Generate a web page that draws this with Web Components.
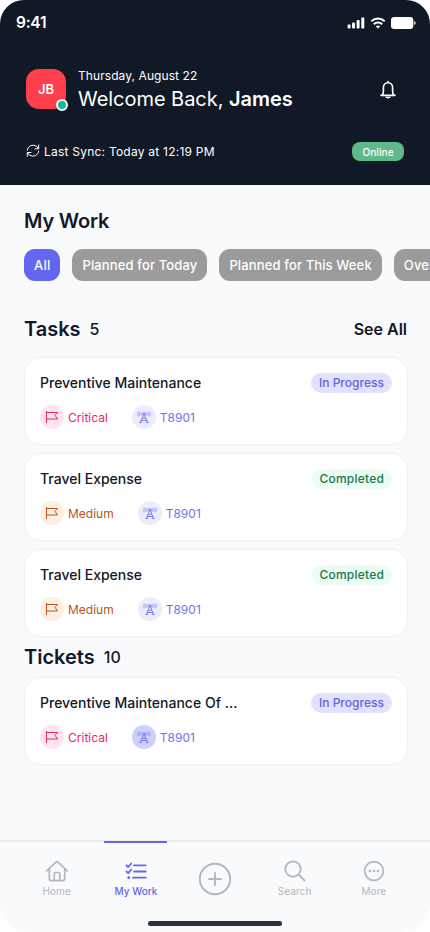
<!DOCTYPE html>
<html lang="en">
<head>
<meta charset="utf-8">
<title>My Work</title>
<style>
html,body{margin:0;padding:0;background:#fff}
body{width:430px;height:932px;overflow:hidden;font-family:Inter,"Liberation Sans",sans-serif;color:#111927}
</style>
</head>
<body>
<work-app></work-app>
<script>
function define(name, html) {
  const t = document.createElement('template');
  t.innerHTML = html;
  customElements.define(name, class extends HTMLElement {
    constructor() {
      super();
      this.attachShadow({ mode: 'open' }).append(t.content.cloneNode(true));
    }
  });
}

const ICONS = {
  sync: '<svg width="14" height="14" viewBox="0 0 14 14" fill="none" stroke="currentColor" stroke-linecap="round" stroke-linejoin="round"><path d="M12.700 1v3.800H9M1.300 12.300V8.500H5M12.500 4.600A5.900 5.900 0 0 0 2.200 3.800Q1.300 5 1.300 6.200M1.500 8.700a5.900 5.900 0 0 0 10.300.8q.9-1.200.9-2.400"/></svg>',
  bell: '<svg width="18" height="20" viewBox="0 0 18 20" fill="none" stroke="currentColor" stroke-width="1.600" stroke-linecap="round" stroke-linejoin="round"><path d="M9 1.500v1.200M2 15.400h14M3.200 15.200Q4.400 13.500 4.400 11V7.400a4.600 4.600 0 0 1 9.200 0V11q0 2.500 1.200 4.200"/><path d="M7 17.400q2 1.600 4 0z" fill="currentColor" stroke-width="1"/></svg>',
  signal: '<svg width="18" height="12" viewBox="0 0 18 12" fill="currentColor"><rect x=".6" y="7.500" width="3" height="4" rx=".9"/><rect x="5" y="5.500" width="3" height="6" rx=".9"/><rect x="9.600" y="3" width="3" height="8.500" rx=".9"/><rect x="14.300" y=".5" width="3" height="11" rx=".9"/></svg>',
  wifi: '<svg width="16" height="12" viewBox="0 0 16 12" fill="none" stroke="currentColor" stroke-width="2"><path d="M1.300 4.300Q4.200 1.500 8 1.500T14.700 4.300"/><path d="M3.800 7.200Q5.600 5.500 8 5.500T12.200 7.200"/><path d="M5.800 9.300Q8 7.700 10.200 9.300L8 11.600z" fill="currentColor" stroke="none"/></svg>',
  battery: '<svg width="25" height="12" viewBox="0 0 25 12" fill="currentColor"><rect width="22.300" height="12" rx="3.200"/><path d="M23.200 4v4q1.400-.6 1.400-2t-1.400-2z"/></svg>',
  flag: '<svg width="14" height="14" viewBox="0 0 14 14" fill="none" stroke="currentColor" stroke-linecap="round" stroke-linejoin="round"><path d="M1.500 1.500v11M1.500 2.500h11.200l-2.800 2.800 2.800 3.700H1.500"/></svg>',
  tower: '<svg width="14" height="14" viewBox="0 0 14 14" fill="none" stroke="currentColor" stroke-width=".9" stroke-linecap="round" stroke-linejoin="round"><path d="M3.500 12.300 6.300 5.500h1.400l2.800 6.800M5.300 8.300h3.400M4.300 10.500h5.400M2.700 12.400h2M9.300 12.400h2"/><circle cx="7" cy="4" r="1.200"/><path d="M4.700 2.700q-.7 1.200 0 2.600M9.300 2.700q.7 1.200 0 2.600M2.900 2.200q-.8 1.600 0 3.400M11.100 2.200q.8 1.600 0 3.400M1.100 1.900q-.8 2 0 4M12.900 1.900q.8 2 0 4" stroke-width=".6"/></svg>',
  home: '<svg width="24" height="22" viewBox="0 0 24 22" fill="none" stroke="currentColor" stroke-width="1.700" stroke-linecap="round" stroke-linejoin="round"><path d="M1.500 11 11.500 1.700a.7.700 0 0 1 1 0L22.500 11M4.300 8.800v10q0 1.900 1.900 1.900h11.600q1.900 0 1.900-1.900v-10M9.200 20.500v-6.700q0-1.300 1.300-1.300h3q1.300 0 1.300 1.300v6.700"/></svg>',
  checks: '<svg width="22" height="18" viewBox="0 0 22 18" fill="none" stroke="currentColor" stroke-width="1.800" stroke-linecap="round" stroke-linejoin="round"><path d="M9 3.300h11.700M9 9.500h11.700M8 15.700h12.700M1.500 3.300 3.200 5 6.300 1.500M1.500 9.500l1.700 1.700 3.100-3.500"/><circle cx="3.700" cy="15.700" r="1.400" fill="currentColor" stroke="none"/></svg>',
  plus: '<svg width="34" height="34" viewBox="0 0 34 34" fill="none" stroke="currentColor" stroke-width="1.900" stroke-linecap="round"><circle cx="17" cy="17" r="15.200"/><path d="M17 11v12M11 17h12"/></svg>',
  search: '<svg width="22" height="22" viewBox="0 0 22 22" fill="none" stroke="currentColor" stroke-width="1.800" stroke-linecap="round"><circle cx="9" cy="9" r="7.700"/><path d="m14.700 14.700 5.800 5.800"/></svg>',
  more: '<svg width="22" height="22" viewBox="0 0 22 22" fill="none" stroke="currentColor" stroke-width="1.700"><circle cx="11" cy="11" r="9.400"/><g fill="currentColor" stroke="none"><circle cx="7" cy="11" r="1.300"/><circle cx="11" cy="11" r="1.300"/><circle cx="15" cy="11" r="1.300"/></g></svg>'
};

customElements.define('ui-icon', class extends HTMLElement {
  constructor() {
    super();
    this.attachShadow({ mode: 'open' });
  }
  connectedCallback() {
    this.shadowRoot.innerHTML = '<style>:host{display:inline-flex;flex:none}svg{display:block}</style>' + ICONS[this.getAttribute('name')];
  }
});

define('status-bar', `<style>
:host{display:flex;justify-content:space-between;align-items:center;height:46px;padding:0 14px 0 16px;box-sizing:border-box}
.time{font-size:15.500px;font-weight:600;line-height:20px;letter-spacing:-.25px}
.sys{display:flex;gap:5px;align-items:center}
</style><span class="time">9:41</span><span class="sys"><ui-icon name="signal"></ui-icon><ui-icon name="wifi"></ui-icon><ui-icon name="battery"></ui-icon></span>`);

define('user-avatar', `<style>
:host{display:flex;position:relative;width:40px;height:40px;border-radius:13px;background:#ff3f4c;align-items:center;justify-content:center;font-size:13px;font-weight:600;letter-spacing:-.1px;flex:none}
i{position:absolute;right:-2px;bottom:-2px;width:8px;height:8px;border:2px solid #fff;border-radius:50%;background:#14b8a0}
</style><slot></slot><i></i>`);

define('app-header', `<style>
:host{display:block;flex:none;height:185px;background:#111927;color:#fff;border-radius:24px 24px 0 0}
.me{display:flex;align-items:center;padding:23px 33px 0 26px;height:40px}
.txt{margin-left:12px;flex:1;padding-top:2px}
.date{font-size:12px;line-height:16px;letter-spacing:.08px}
.hello{font-size:20px;line-height:28px;margin-top:1px;white-space:nowrap;letter-spacing:-.04px}
.bell{margin-top:2px}
b{font-weight:600}
.sync{display:flex;align-items:center;padding:0 26px;margin-top:32px;height:20px;font-size:12px;letter-spacing:.23px}
.sync span{margin-left:4px;flex:1;padding-top:1px}
.on{height:19px;width:52px;border-radius:8px;background:#5fba8b;font-size:10px;font-weight:500;text-align:center;line-height:20px;letter-spacing:.1px}
</style><status-bar></status-bar>
<div class="me"><user-avatar>JB</user-avatar><div class="txt"><div class="date">Thursday, August 22</div><div class="hello">Welcome Back, <b>James</b></div></div><ui-icon class="bell" name="bell"></ui-icon></div>
<div class="sync"><ui-icon name="sync"></ui-icon><span>Last Sync: Today at 12:19 PM</span><div class="on">Online</div></div>`);

define('filter-chip', `<style>
:host{display:block;flex:none;box-sizing:border-box;height:32px;padding:0 10px;border-radius:11px;background:#9b9b9b;color:#fff;font-size:13px;font-weight:500;line-height:32px;letter-spacing:.13px;white-space:nowrap}
:host([active]){background:#6366f1;letter-spacing:.22px}
</style><slot></slot>`);

define('section-title', `<style>
:host{display:flex;align-items:center;height:28px;padding-right:1px}
.t{font-size:20px;font-weight:600;line-height:28px}
.n{font-size:16px;font-weight:500;margin-left:9px;flex:1;line-height:28px}
.a{font-size:16px;font-weight:600;line-height:28px}
</style><span class="t"><slot></slot></span><span class="n"><slot name="count"></slot></span><span class="a"><slot name="action"></slot></span>`);

define('work-card', `<style>
:host{display:block;box-sizing:border-box;height:88px;border:1px solid #f0f1f3;border-radius:16px;background:#fff;padding:15px 15px 0}
:host{--pill:#e0e2ff;--pillc:#6062e4;--flag:#ffe4eb;--flagc:#e62560;--tower:#ececfe}
:host([done]){--pill:#ecfcf3;--pillc:#157a45}
:host([medium]){--flag:#ffefdf;--flagc:#bd5223}
:host([strong]){--tower:#cfd0fa}
.top{display:flex;justify-content:space-between;align-items:center;height:20px}
.name{font-size:14px;font-weight:500;letter-spacing:0;line-height:18px;margin-bottom:1px}
.pill{height:20px;border-radius:10px;padding:0 8px;background:var(--pill);color:var(--pillc);font-size:12px;font-weight:500;line-height:20px;letter-spacing:.02px}
:host([done]) .pill{letter-spacing:.2px}
.tags{display:flex;margin-top:12px;height:24px;font-size:12px;gap:24px;letter-spacing:0}
.tag{display:flex;align-items:center;gap:4px}
.tag i{display:flex;align-items:center;justify-content:center;width:24px;height:24px;border-radius:50%}
.p{color:var(--flagc)}.p i{background:var(--flag)}
.s{color:#7073e8;letter-spacing:0}.s i{background:var(--tower)}
</style><div class="top"><span class="name"><slot></slot></span><span class="pill"><slot name="status"></slot></span></div>
<div class="tags"><span class="tag p"><i><ui-icon name="flag"></ui-icon></i><slot name="priority"></slot></span><span class="tag s"><i><ui-icon name="tower"></ui-icon></i><slot name="site"></slot></span></div>`);

define('nav-item', `<style>
:host{display:flex;flex-direction:column;align-items:center;width:79.300px;height:90px;box-sizing:border-box;color:#b0b8bf;font-size:10px;letter-spacing:.1px}
.bar{width:63px;height:2px;flex:none}
:host([active]){color:#6366f1;font-weight:500;letter-spacing:0}
:host([active]) .bar{background:#6366f1}
.ic{height:22px;margin-top:17px;display:flex;align-items:center}
.l{line-height:14px;margin-top:2px}
:host([big]) .ic{height:34px;margin-top:19px}
</style><div class="bar"></div><div class="ic"><slot name="icon"></slot></div><div class="l"><slot></slot></div>`);

define('tab-bar', `<style>
:host{display:block;flex:none;height:92px;box-sizing:border-box;background:#f8fafc;border-radius:0 0 28px 28px;position:relative}
.line{height:2px;background:#ebedef}
.row{display:flex;padding-left:17px;margin-top:-1px}
.ind{position:absolute;left:148px;top:81px;width:134px;height:5px;border-radius:3px;background:#29303e}
</style><div class="line"></div><div class="row">
<nav-item><ui-icon slot="icon" name="home"></ui-icon>Home</nav-item>
<nav-item active><ui-icon slot="icon" name="checks"></ui-icon>My Work</nav-item>
<nav-item big><ui-icon slot="icon" name="plus"></ui-icon></nav-item>
<nav-item><ui-icon slot="icon" name="search"></ui-icon>Search</nav-item>
<nav-item><ui-icon slot="icon" name="more"></ui-icon>More</nav-item>
</div><div class="ind"></div>`);

define('work-app', `<style>
:host{display:flex;flex-direction:column;width:430px;height:932px;overflow:hidden}
main{height:655px;flex:none;background:#f8fafc;box-sizing:border-box;padding:22px 22px 0 24px;overflow:hidden}
h1{margin:0;font-size:20px;font-weight:600;line-height:28px;letter-spacing:-.2px}
.chips{display:flex;gap:12px;margin:14px -22px 0 0;overflow:hidden}
.tasks{margin-top:34px}
.list{display:flex;flex-direction:column;gap:8px;margin-top:14px}
.list.k{margin-top:6px}
.tickets{margin-top:6px}
</style><app-header></app-header>
<main><h1>My Work</h1>
<div class="chips"><filter-chip active>All</filter-chip><filter-chip>Planned for Today</filter-chip><filter-chip>Planned for This Week</filter-chip><filter-chip>Overdue</filter-chip></div>
<section-title class="tasks">Tasks<span slot="count">5</span><span slot="action">See All</span></section-title>
<div class="list">
<work-card>Preventive Maintenance<span slot="status">In Progress</span><span slot="priority">Critical</span><span slot="site">T8901</span></work-card>
<work-card done medium>Travel Expense<span slot="status">Completed</span><span slot="priority">Medium</span><span slot="site">T8901</span></work-card>
<work-card done medium>Travel Expense<span slot="status">Completed</span><span slot="priority">Medium</span><span slot="site">T8901</span></work-card>
</div>
<section-title class="tickets">Tickets<span slot="count">10</span></section-title>
<div class="list k"><work-card strong>Preventive Maintenance Of ...<span slot="status">In Progress</span><span slot="priority">Critical</span><span slot="site">T8901</span></work-card></div>
</main><tab-bar></tab-bar>`);
</script>
</body>
</html>
